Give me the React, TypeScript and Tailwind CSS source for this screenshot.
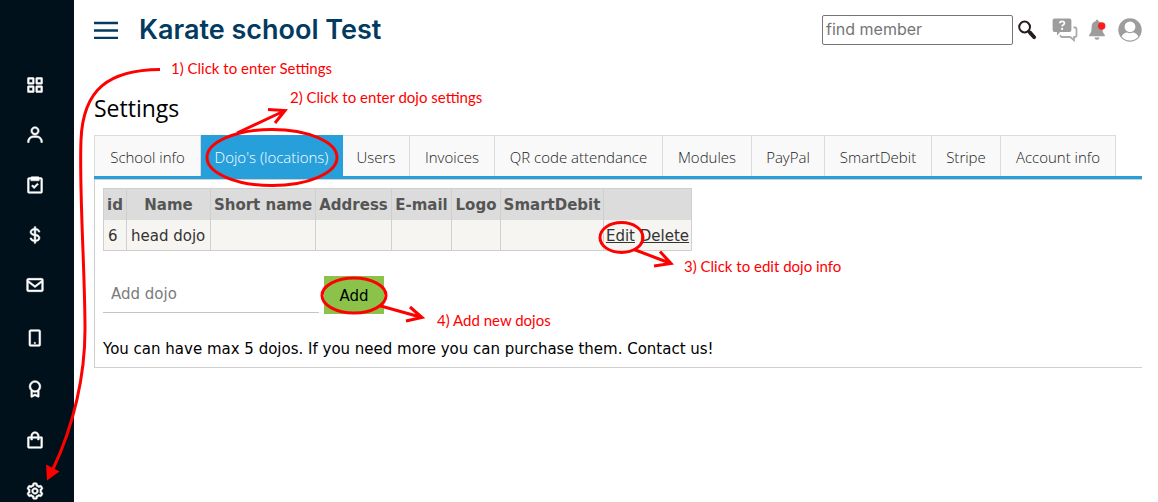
import React from "react";
import {
  BiAward,
  BiCog,
  BiDollar,
  BiEnvelope,
  BiGridAlt,
  BiMobileAlt,
  BiShoppingBag,
  BiTask,
  BiUser,
} from "react-icons/bi";

const mainLinks = [
  { label: "Dashboard", Icon: BiGridAlt },
  { label: "Members", Icon: BiUser },
  { label: "Attendance", Icon: BiTask },
  { label: "Payments", Icon: BiDollar },
  { label: "Messages", Icon: BiEnvelope },
];

const extraLinks = [
  { label: "App", Icon: BiMobileAlt },
  { label: "Grading", Icon: BiAward },
  { label: "Shop", Icon: BiShoppingBag },
  { label: "Settings", Icon: BiCog },
];

const tabs = [
  { label: "School info", width: "w-[107px]" },
  { label: "Dojo's (locations)", width: "w-[142px]" },
  { label: "Users", width: "w-[67px]" },
  { label: "Invoices", width: "w-[85px]" },
  { label: "QR code attendance", width: "w-[168px]" },
  { label: "Modules", width: "w-[89px]" },
  { label: "PayPal", width: "w-[73px]" },
  { label: "SmartDebit", width: "w-[107px]" },
  { label: "Stripe", width: "w-[69px]" },
  { label: "Account info", width: "w-[115px]" },
];

const columns = [
  { label: "id", width: "w-[23px]" },
  { label: "Name", width: "w-[84px]" },
  { label: "Short name", width: "w-[105px]" },
  { label: "Address", width: "w-[76px]" },
  { label: "E-mail", width: "w-[60px]" },
  { label: "Logo", width: "w-[49px]" },
  { label: "SmartDebit", width: "w-[103px]" },
  { label: "", width: "w-[88px]" },
];

function Sidebar() {
  return (
    <nav className="sticky top-0 h-screen w-[74px] shrink-0 overflow-hidden bg-[#00111c] pt-[60px] text-white">
      <ul>
        {mainLinks.map(({ label, Icon }) => (
          <li key={label}>
            <a href="#" aria-label={label} className="flex h-[50px] items-center justify-center pr-1">
              <Icon size={20} className="stroke-current stroke-[0.6]" />
            </a>
          </li>
        ))}
      </ul>
      <ul className="mt-0.5">
        {extraLinks.map(({ label, Icon }) => (
          <li key={label}>
            <a href="#" aria-label={label} className="flex h-[51px] items-center justify-center pr-1">
              <Icon size={20} className="stroke-current stroke-[0.6]" />
            </a>
          </li>
        ))}
      </ul>
    </nav>
  );
}

function Header() {
  return (
    <header className="flex h-[60px] items-center pr-4 pl-5">
      <button type="button" aria-label="Toggle menu" className="text-[#023b5f]">
        <svg className="h-[18px] w-6" viewBox="0 0 24 18" stroke="currentColor" strokeWidth="2.4">
          <path d="M0 2h24M0 9.500h24M0 17h24" />
        </svg>
      </button>
      <h1 className="ml-[21px] font-['Inter',sans-serif] text-[27px] font-semibold text-[#023b5f]">
        Karate school Test
      </h1>

      <form className="ml-auto flex items-center" onSubmit={(e) => e.preventDefault()}>
        <input
          type="text"
          aria-label="find member"
          placeholder="find member"
          className="h-[30px] w-[191px] rounded-xs border border-[#767676] px-[3px] pb-0.5 font-['Inter',sans-serif] text-base placeholder:text-[#757575]"
        />
        <button type="submit" aria-label="Search" className="ml-[5px]">
          <svg className="h-5 w-5" viewBox="0 0 20 20" fill="none" stroke="#231c1a">
            <circle cx="6.600" cy="7" r="5.400" strokeWidth="2" />
            <path d="M10.400 11l1.400 1.400" strokeWidth="2.400" />
            <path d="M11.800 12.400l4.400 4.800" strokeWidth="3.800" strokeLinecap="round" />
          </svg>
        </button>
      </form>

      <button type="button" aria-label="Help" className="ml-[14px]">
        <svg className="h-6 w-[26px]" viewBox="0 0 26 24">
          <path
            d="M21.500 9.500h1.500a1.500 1.500 0 011.500 1.500v6.500a1.500 1.500 0 01-1.500 1.500h-1v3.200l-3.800-3.200H10a1.500 1.500 0 01-1.500-1.500v-.5"
            fill="none"
            stroke="#ababab"
            strokeWidth="1.800"
          />
          <path d="M2.500.5h15a1.900 1.900 0 011.900 1.900v9.700a1.900 1.900 0 01-1.900 1.900H8l-3 3.500V14H2.500a1.900 1.900 0 01-1.900-1.900V2.400A1.900 1.900 0 012.500.5z" fill="#9d9d9d" />
          <path d="M7.700 5.200c.2-2.500 4.800-2.500 4.700 0 0 1.600-2.300 1.500-2.300 3.300" fill="none" stroke="#fff" strokeWidth="1.700" />
          <circle cx="10.100" cy="10.900" r="1.100" fill="#fff" />
        </svg>
      </button>
      <button type="button" aria-label="Notifications" className="ml-[11px]">
        <svg className="h-[22px] w-[17px]" viewBox="0 0 17 22">
          <path
            d="M8 .8c-.9 0-1.400.7-1.400 1.500C4 3 2.600 5.200 2.600 8c0 4.500-.8 6.300-2.400 7.700v1.500h15.600v-1.500C14.200 14.300 13.400 12.500 13.400 8c0-2.800-1.400-5-4-5.700 0-.8-.5-1.500-1.400-1.500zM5.500 18.500a2.500 2.300 0 005 0z"
            fill="#9d9d9d"
          />
          <circle cx="12.700" cy="7" r="3.700" fill="#fd1c1c" />
        </svg>
      </button>
      <button type="button" aria-label="Account" className="ml-3">
        <svg className="h-6 w-6" viewBox="0 0 24 24">
          <circle cx="12" cy="12" r="11.700" fill="#9d9d9d" />
          <circle cx="12" cy="8.800" r="5.400" fill="#fff" />
          <path d="M3.600 18.600c1-2.500 3.200-3.900 5.500-4.100 1.800.9 4 .9 5.800 0 2.300.2 4.500 1.600 5.500 4.100A10.600 10.600 0 0112 22.600a10.600 10.600 0 01-8.400-4z" fill="#fff" />
        </svg>
      </button>
    </header>
  );
}

function Tabs() {
  return (
    <div
      role="tablist"
      className="flex border-b-[3px] border-[#279fdb] font-['Open_Sans',sans-serif] text-[15px] font-light text-[#222]"
    >
      {tabs.map(({ label, width }, i) => (
        <button
          key={label}
          type="button"
          role="tab"
          aria-selected={i === 1}
          className={`h-[41px] shrink-0 whitespace-nowrap border-t border-r pt-0.5 ${width} ${
            i === 1 ? "border-[#279fdb] bg-[#279fdb] text-white" : "border-[#dcdcdc] bg-[#f9f9f9]"
          } ${i === 0 ? "border-l" : ""}`}
        >
          {label}
        </button>
      ))}
    </div>
  );
}

function DojoTable() {
  return (
    <table className="table-fixed border-collapse text-[#333]">
      <thead>
        <tr className="h-[31px] bg-[#dcdcdc] text-[#555]">
          {columns.map(({ label, width }, i) => (
            <th key={i} className={`whitespace-nowrap border-x border-t border-[#cfcfcf] px-0 pt-0.5 font-bold ${width}`}>
              {label}
            </th>
          ))}
        </tr>
      </thead>
      <tbody>
        <tr className="h-[31px] bg-[#f6f5f1]">
          <td className="border-x border-b border-[#cfcfcf] pt-0.5 pl-1">6</td>
          <td className="whitespace-nowrap border-x border-b border-[#cfcfcf] pt-0.5 pl-1">head dojo</td>
          <td className="border-x border-b border-[#cfcfcf]" />
          <td className="border-x border-b border-[#cfcfcf]" />
          <td className="border-x border-b border-[#cfcfcf]" />
          <td className="border-x border-b border-[#cfcfcf]" />
          <td className="border-x border-b border-[#cfcfcf]" />
          <td className="whitespace-nowrap border-x border-b border-[#cfcfcf] pt-0.5 text-center">
            <a href="#" className="underline">Edit</a> <a href="#" className="underline">Delete</a>
          </td>
        </tr>
      </tbody>
    </table>
  );
}

// Red guide marks that lie over the page
function Guide() {
  return (
    <div className="pointer-events-none absolute inset-0 overflow-hidden font-['Lato',sans-serif] text-[15px] leading-5 whitespace-nowrap text-[#f00]">
      <svg className="absolute top-0 left-0 h-[502px] w-[1158px]" viewBox="0 0 1158 502" fill="none" stroke="#f00" strokeWidth="3">
        <path d="M160 69.500C110 70 83 88 81 140C79 190 85 270 85 330C85 375 74 425 53 469" />
        <path d="M47 480.500L46 464.500L59.500 471.500Z" fill="#f00" stroke="none" />
        <ellipse cx="272" cy="157.500" rx="65" ry="28" />
        <path d="M237 133L284 111M268 109.500L285 110.500L275 123" />
        <ellipse cx="621.500" cy="237.500" rx="21.500" ry="15" />
        <path d="M634 249.500L671 263.500M660 251.500L671 263.500L654 266" />
        <ellipse cx="354" cy="295.500" rx="32" ry="17.500" />
        <path d="M379 305.500L422 317.500M410 307L422 317.500L406 321" />
      </svg>
      <span className="absolute top-[58px] left-[171px]">1) Click to enter Settings</span>
      <span className="absolute top-[87px] left-[290px]">2) Click to enter dojo settings</span>
      <span className="absolute top-[256px] left-[684px]">3) Click to edit dojo info</span>
      <span className="absolute top-[310px] left-[437px]">4) Add new dojos</span>
    </div>
  );
}

function App() {
  return (
    <div className="relative flex min-h-screen bg-white font-['DejaVu_Sans',Verdana,sans-serif] text-[15px] text-black">
      <Sidebar />
      <div className="min-w-0 flex-1">
        <Header />
        <main className="pr-4 pl-5">
          <h2 className="pt-8 pb-[11px] font-['Open_Sans',sans-serif] text-[23px] leading-8">Settings</h2>
          <Tabs />
          <section className="border-t border-b border-l border-[#cfcfcf] px-2 pt-2 pb-1.5">
            <DojoTable />
            <form className="mt-[25px] flex items-start gap-[5px]" onSubmit={(e) => e.preventDefault()}>
              <input
                type="text"
                aria-label="Add dojo"
                placeholder="Add dojo"
                className="h-[37px] w-[216px] border-b border-[#c4c4c4] px-2 placeholder:text-[#7b7b7b]"
              />
              <button type="submit" className="h-[38px] w-[60px] bg-[#8bc34a] pt-0.5">
                Add
              </button>
            </form>
            <p className="mt-[23px] leading-6">
              You can have max 5 dojos. If you need more you can purchase them. Contact us!
            </p>
          </section>
        </main>
      </div>
      <Guide />
    </div>
  );
}

export default App;
